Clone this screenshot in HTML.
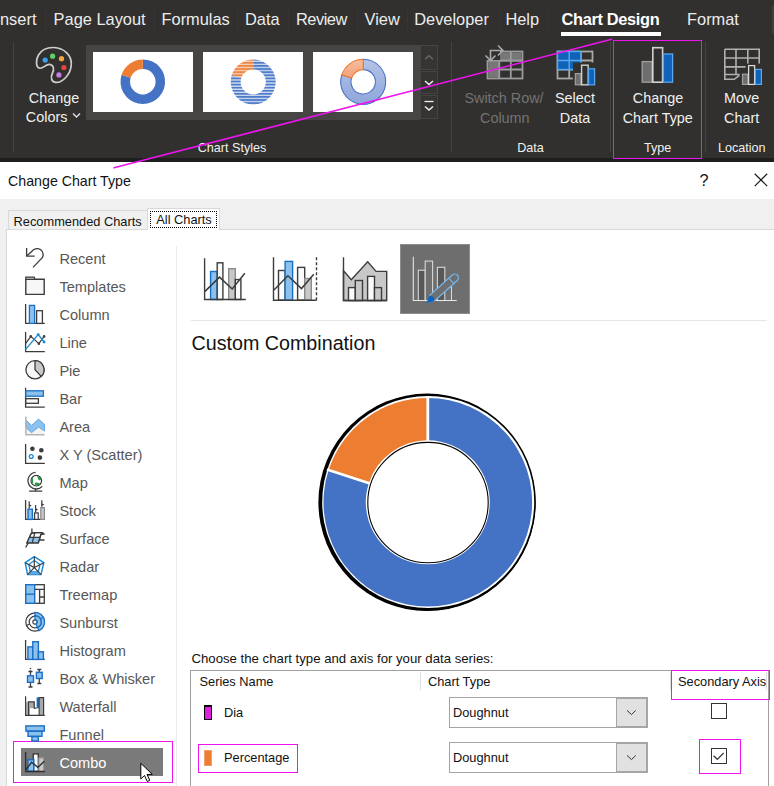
<!DOCTYPE html>
<html><head><meta charset="utf-8"><style>
html,body{margin:0;padding:0;width:774px;height:786px;overflow:hidden;background:#fff}
body{position:relative;font-family:"Liberation Sans",sans-serif}
.t{position:absolute;white-space:nowrap;font-family:"Liberation Sans",sans-serif}
svg{overflow:visible}
</style></head><body>
<div style="position:absolute;left:0px;top:0px;width:774px;height:158px;background:#31302f"></div>
<div style="position:absolute;left:0px;top:158px;width:774px;height:4px;background:#1e1e1e"></div>
<div class="t" style="left:0.00px;top:10px;font-size:16.4px;line-height:18px;color:#ececec;font-weight:400;">nsert</div>
<div class="t" style="left:53.60px;top:10px;font-size:16.4px;line-height:18px;color:#ececec;font-weight:400;">Page Layout</div>
<div class="t" style="left:161.50px;top:10px;font-size:16.4px;line-height:18px;color:#ececec;font-weight:400;">Formulas</div>
<div class="t" style="left:245.00px;top:10px;font-size:16.4px;line-height:18px;color:#ececec;font-weight:400;">Data</div>
<div class="t" style="left:296.00px;top:10px;font-size:16.4px;line-height:18px;color:#ececec;font-weight:400;letter-spacing:-0.5px">Review</div>
<div class="t" style="left:364.50px;top:10px;font-size:16.4px;line-height:18px;color:#ececec;font-weight:400;">View</div>
<div class="t" style="left:414.20px;top:10px;font-size:16.4px;line-height:18px;color:#ececec;font-weight:400;">Developer</div>
<div class="t" style="left:505.40px;top:10px;font-size:16.4px;line-height:18px;color:#ececec;font-weight:400;">Help</div>
<div class="t" style="left:561.50px;top:10px;font-size:16.4px;line-height:18px;color:#ffffff;font-weight:700;letter-spacing:-0.35px">Chart Design</div>
<div class="t" style="left:687.00px;top:10px;font-size:16.4px;line-height:18px;color:#ececec;font-weight:400;">Format</div>
<div style="position:absolute;left:45px;top:6px;width:1px;height:25px;background:#363534"></div>
<div style="position:absolute;left:154px;top:6px;width:1px;height:25px;background:#363534"></div>
<div style="position:absolute;left:237px;top:6px;width:1px;height:25px;background:#363534"></div>
<div style="position:absolute;left:288px;top:6px;width:1px;height:25px;background:#363534"></div>
<div style="position:absolute;left:357px;top:6px;width:1px;height:25px;background:#363534"></div>
<div style="position:absolute;left:407px;top:6px;width:1px;height:25px;background:#363534"></div>
<div style="position:absolute;left:499px;top:6px;width:1px;height:25px;background:#363534"></div>
<div style="position:absolute;left:548px;top:6px;width:1px;height:25px;background:#363534"></div>
<div style="position:absolute;left:561px;top:32px;width:100px;height:4px;background:#ffffff"></div>
<div style="position:absolute;left:772px;top:5px;width:3px;height:29px;background:#403f3e;border-radius:2px 0 0 2px"></div>
<div style="position:absolute;left:13px;top:42px;width:1px;height:110px;background:#444342"></div>
<div style="position:absolute;left:451px;top:42px;width:1px;height:110px;background:#444342"></div>
<div style="position:absolute;left:610px;top:42px;width:1px;height:110px;background:#444342"></div>
<div style="position:absolute;left:705px;top:42px;width:1px;height:110px;background:#444342"></div>
<div class="t" style="left:-246.00px;width:600px;text-align:center;top:90px;font-size:14.4px;line-height:16px;color:#f0f0f0;font-weight:400;">Change</div>
<div class="t" style="left:25.80px;top:109px;font-size:14.4px;line-height:16px;color:#f0f0f0;font-weight:400;">Colors</div>
<svg style="position:absolute;left:72px;top:112px" width="9" height="7" viewBox="0 0 9 7"><path d="M1 1.5 L4.5 5 L8 1.5" fill="none" stroke="#e0e0e0" stroke-width="1.4"/></svg>
<div style="position:absolute;left:86px;top:45px;width:334px;height:75px;background:#464544"></div>
<div style="position:absolute;left:93px;top:52px;width:100px;height:60px;background:#ffffff"></div>
<div style="position:absolute;left:203px;top:52px;width:100px;height:60px;background:#ffffff"></div>
<div style="position:absolute;left:313px;top:52px;width:100px;height:60px;background:#ffffff"></div>
<div style="position:absolute;left:420px;top:45px;width:18px;height:25px;background:#353433;border:1px solid #454443;box-sizing:border-box"></div>
<div style="position:absolute;left:420px;top:71px;width:18px;height:23px;background:#353433;border:1px solid #454443;box-sizing:border-box"></div>
<div style="position:absolute;left:420px;top:95px;width:18px;height:24px;background:#353433;border:1px solid #454443;box-sizing:border-box"></div>
<svg style="position:absolute;left:420px;top:45px" width="18" height="25" viewBox="0 0 18 25"><path d="M5 14.2 L9 10.7 L13 14.2" fill="none" stroke="#6a6a6a" stroke-width="1.3"/></svg>
<svg style="position:absolute;left:420px;top:71px" width="18" height="23" viewBox="0 0 18 23"><path d="M5 10 L9 13.5 L13 10" fill="none" stroke="#f0f0f0" stroke-width="1.5"/></svg>
<svg style="position:absolute;left:420px;top:95px" width="18" height="24" viewBox="0 0 18 24"><path d="M4.5 6.5 H13.5" stroke="#f0f0f0" stroke-width="1.3"/><path d="M5 11.5 L9 15 L13 11.5" fill="none" stroke="#f0f0f0" stroke-width="1.5"/></svg>
<div class="t" style="left:-68.00px;width:600px;text-align:center;top:141px;font-size:12.6px;line-height:14px;color:#f0f0f0;font-weight:400;">Chart Styles</div>
<div class="t" style="left:464.40px;top:90px;font-size:14.4px;line-height:16px;color:#747372;font-weight:400;">Switch Row/</div>
<div class="t" style="left:480.00px;top:110px;font-size:14.4px;line-height:16px;color:#747372;font-weight:400;">Column</div>
<div class="t" style="left:555.00px;top:90px;font-size:14.4px;line-height:16px;color:#f0f0f0;font-weight:400;">Select</div>
<div class="t" style="left:559.80px;top:110px;font-size:14.4px;line-height:16px;color:#f0f0f0;font-weight:400;">Data</div>
<div class="t" style="left:230.50px;width:600px;text-align:center;top:141px;font-size:12.6px;line-height:14px;color:#f0f0f0;font-weight:400;">Data</div>
<div class="t" style="left:358.00px;width:600px;text-align:center;top:90px;font-size:14.4px;line-height:16px;color:#f0f0f0;font-weight:400;">Change</div>
<div class="t" style="left:357.80px;width:600px;text-align:center;top:110px;font-size:14.4px;line-height:16px;color:#f0f0f0;font-weight:400;">Chart Type</div>
<div class="t" style="left:357.60px;width:600px;text-align:center;top:141px;font-size:12.6px;line-height:14px;color:#f0f0f0;font-weight:400;">Type</div>
<div class="t" style="left:441.60px;width:600px;text-align:center;top:90px;font-size:14.4px;line-height:16px;color:#f0f0f0;font-weight:400;">Move</div>
<div class="t" style="left:441.60px;width:600px;text-align:center;top:110px;font-size:14.4px;line-height:16px;color:#f0f0f0;font-weight:400;">Chart</div>
<div class="t" style="left:441.70px;width:600px;text-align:center;top:141px;font-size:12.6px;line-height:14px;color:#f0f0f0;font-weight:400;">Location</div>
<div style="position:absolute;left:0px;top:162px;width:774px;height:624px;background:#ffffff"></div>
<div class="t" style="left:8.10px;top:173px;font-size:14.2px;line-height:16px;color:#121212;font-weight:400;">Change Chart Type</div>
<div class="t" style="left:404.10px;width:600px;text-align:center;top:171px;font-size:16.2px;line-height:18px;color:#121212;font-weight:400;">?</div>
<svg style="position:absolute;left:750px;top:170px" width="22" height="22" viewBox="0 0 22 22"><path d="M4.7 3.7 L17.2 16.1 M17.2 3.7 L4.7 16.1" stroke="#1a1a1a" stroke-width="1.2"/></svg>
<div style="position:absolute;left:0px;top:199px;width:774px;height:587px;background:#f0f0f0"></div>
<div style="position:absolute;left:6px;top:229px;width:768px;height:557px;background:#ffffff;border-top:1px solid #d9d9d9;border-left:1px solid #d9d9d9;box-sizing:border-box"></div>
<div style="position:absolute;left:8px;top:210px;width:140px;height:19px;background:#f0f0f0;border:1px solid #d9d9d9;border-bottom:none;box-sizing:border-box"></div>
<div style="position:absolute;left:147px;top:208px;width:73px;height:22px;background:#ffffff;border:1px solid #d9d9d9;border-bottom:none;box-sizing:border-box"></div>
<div style="position:absolute;left:150px;top:211px;width:67px;height:17px;border:1px dotted #000;box-sizing:border-box"></div>
<div class="t" style="left:13.60px;top:214px;font-size:12.8px;line-height:15px;color:#121212;font-weight:400;">Recommended Charts</div>
<div class="t" style="left:156.30px;top:212px;font-size:12.8px;line-height:15px;color:#121212;font-weight:400;">All Charts</div>
<div style="position:absolute;left:176px;top:246px;width:1px;height:540px;background:#ebebeb"></div>
<div class="t" style="left:59.40px;top:251px;font-size:14.6px;line-height:16px;color:#575757;font-weight:400;">Recent</div>
<div class="t" style="left:59.40px;top:279px;font-size:14.6px;line-height:16px;color:#575757;font-weight:400;">Templates</div>
<div class="t" style="left:59.40px;top:307px;font-size:14.6px;line-height:16px;color:#575757;font-weight:400;">Column</div>
<div class="t" style="left:59.40px;top:335px;font-size:14.6px;line-height:16px;color:#575757;font-weight:400;">Line</div>
<div class="t" style="left:59.40px;top:363px;font-size:14.6px;line-height:16px;color:#575757;font-weight:400;">Pie</div>
<div class="t" style="left:59.40px;top:391px;font-size:14.6px;line-height:16px;color:#575757;font-weight:400;">Bar</div>
<div class="t" style="left:59.40px;top:419px;font-size:14.6px;line-height:16px;color:#575757;font-weight:400;">Area</div>
<div class="t" style="left:59.40px;top:447px;font-size:14.6px;line-height:16px;color:#575757;font-weight:400;">X Y (Scatter)</div>
<div class="t" style="left:59.40px;top:475px;font-size:14.6px;line-height:16px;color:#575757;font-weight:400;">Map</div>
<div class="t" style="left:59.40px;top:503px;font-size:14.6px;line-height:16px;color:#575757;font-weight:400;">Stock</div>
<div class="t" style="left:59.40px;top:531px;font-size:14.6px;line-height:16px;color:#575757;font-weight:400;">Surface</div>
<div class="t" style="left:59.40px;top:559px;font-size:14.6px;line-height:16px;color:#575757;font-weight:400;">Radar</div>
<div class="t" style="left:59.40px;top:587px;font-size:14.6px;line-height:16px;color:#575757;font-weight:400;">Treemap</div>
<div class="t" style="left:59.40px;top:615px;font-size:14.6px;line-height:16px;color:#575757;font-weight:400;">Sunburst</div>
<div class="t" style="left:59.40px;top:643px;font-size:14.6px;line-height:16px;color:#575757;font-weight:400;">Histogram</div>
<div class="t" style="left:59.40px;top:671px;font-size:14.6px;line-height:16px;color:#575757;font-weight:400;">Box &amp; Whisker</div>
<div class="t" style="left:59.40px;top:699px;font-size:14.6px;line-height:16px;color:#575757;font-weight:400;">Waterfall</div>
<div class="t" style="left:59.40px;top:727px;font-size:14.6px;line-height:16px;color:#575757;font-weight:400;">Funnel</div>
<div style="position:absolute;left:21px;top:748px;width:142px;height:28px;background:#7a7a7a"></div>
<div class="t" style="left:59.40px;top:755px;font-size:14.6px;line-height:16px;color:#ffffff;font-weight:400;">Combo</div>
<div style="position:absolute;left:13px;top:741px;width:160px;height:42px;border:1.3px solid #ee14ee;box-sizing:border-box"></div>
<div style="position:absolute;left:400px;top:244px;width:70px;height:70px;background:#6e6e6e;border:1px solid #8c8c8c;box-sizing:border-box"></div>
<div style="position:absolute;left:191px;top:320px;width:576px;height:1px;background:#e6e6e6"></div>
<div class="t" style="left:191.50px;top:332px;font-size:19.7px;line-height:22px;color:#121212;font-weight:400;">Custom Combination</div>
<svg style="position:absolute;left:318px;top:392px" width="220" height="220" viewBox="0 0 220 220">
<circle cx="109.5" cy="110.5" r="108" fill="#000"/>
<circle cx="110.5" cy="110" r="106" fill="#fff"/>
</svg>
<div class="t" style="left:191.50px;top:651px;font-size:13.2px;line-height:15px;color:#121212;font-weight:400;">Choose the chart type and axis for your data series:</div>
<div style="position:absolute;left:190px;top:670px;width:579px;height:116px;border:1px solid #a0a0a0;border-bottom:none;box-sizing:border-box"></div>
<div style="position:absolute;left:420px;top:672px;width:1px;height:18px;background:#e0e0e0"></div>
<div style="position:absolute;left:670px;top:672px;width:1px;height:18px;background:#e0e0e0"></div>
<div style="position:absolute;left:766px;top:672px;width:1px;height:18px;background:#e0e0e0"></div>
<div class="t" style="left:199.50px;top:674px;font-size:12.8px;line-height:15px;color:#121212;font-weight:400;">Series Name</div>
<div class="t" style="left:428.00px;top:674px;font-size:12.8px;line-height:15px;color:#121212;font-weight:400;">Chart Type</div>
<div class="t" style="left:678.00px;top:674px;font-size:12.8px;line-height:15px;color:#121212;font-weight:400;">Secondary Axis</div>
<div style="position:absolute;left:204px;top:705px;width:8px;height:15px;background:#dd20dd;border:1px solid #000;border-top-width:2px;box-sizing:border-box"></div>
<div class="t" style="left:224.00px;top:705px;font-size:12.8px;line-height:15px;color:#121212;font-weight:400;">Dia</div>
<div style="position:absolute;left:204px;top:750px;width:8px;height:16px;background:#ed7d31;border:1px solid #f0a070;box-sizing:border-box"></div>
<div class="t" style="left:224.00px;top:750px;font-size:12.8px;line-height:15px;color:#121212;font-weight:400;">Percentage</div>
<div style="position:absolute;left:449px;top:697px;width:199px;height:31px;background:#fff;border:1px solid #a4a4a8;box-sizing:border-box"></div>
<div style="position:absolute;left:616px;top:697px;width:32px;height:31px;background:#e1e1e1;border:2px solid #a6a6a9;border-left-width:1px;box-sizing:border-box"></div>
<svg style="position:absolute;left:616px;top:697px" width="32" height="30" viewBox="0 0 32 30"><path d="M11 13.4 L15.5 17.6 L19.8 13.4" fill="none" stroke="#333" stroke-width="1"/></svg>
<div class="t" style="left:453.00px;top:705px;font-size:12.8px;line-height:15px;color:#121212;font-weight:400;">Doughnut</div>
<div style="position:absolute;left:449px;top:742px;width:199px;height:31px;background:#fff;border:1px solid #a4a4a8;box-sizing:border-box"></div>
<div style="position:absolute;left:616px;top:742px;width:32px;height:31px;background:#e1e1e1;border:2px solid #a6a6a9;border-left-width:1px;box-sizing:border-box"></div>
<svg style="position:absolute;left:616px;top:742px" width="32" height="30" viewBox="0 0 32 30"><path d="M11 13.4 L15.5 17.6 L19.8 13.4" fill="none" stroke="#333" stroke-width="1"/></svg>
<div class="t" style="left:453.00px;top:750px;font-size:12.8px;line-height:15px;color:#121212;font-weight:400;">Doughnut</div>
<div style="position:absolute;left:711px;top:703px;width:16px;height:16px;background:#fff;border:1px solid #333;box-sizing:border-box"></div>
<div style="position:absolute;left:711px;top:748px;width:16px;height:16px;background:#fff;border:1px solid #333;box-sizing:border-box"></div>
<svg style="position:absolute;left:711px;top:748px" width="16" height="16" viewBox="0 0 16 16"><path d="M2.6 7.8 L6.3 11.3 L12.6 5" fill="none" stroke="#333" stroke-width="1.2"/></svg>
<div style="position:absolute;left:198px;top:744px;width:100px;height:29px;border:1px solid #ee14ee;box-sizing:border-box"></div>
<div style="position:absolute;left:671px;top:670px;width:99px;height:30px;border:1.2px solid #ee14ee;box-sizing:border-box"></div>
<div style="position:absolute;left:699px;top:739px;width:42px;height:35px;border:1px solid #ee14ee;box-sizing:border-box"></div>
<div style="position:absolute;left:613px;top:40px;width:89px;height:119px;border:1px solid #ee14ee;box-sizing:border-box"></div>
<svg style="position:absolute;left:0;top:0" width="774" height="786"><path d="M39.7 68.2 C36 67.5 35.3 60.5 38.5 55 C42 49 48.5 47.3 54 47.5 C64 48 71.5 55 71.3 64 C71 75 62 82.8 55.8 82.4 C51.5 82.2 50.3 77.5 52.3 73.5 C54.5 69.5 53.8 64.8 49.5 64.3 C45.5 64 43.5 68.8 39.7 68.2 Z" fill="none" stroke="#cdcdcd" stroke-width="1.7"/>
<circle cx="45.2" cy="60.1" r="2.6" fill="#3ba1ef"/>
<circle cx="52.6" cy="56.2" r="2.6" fill="#5fd06a"/>
<circle cx="61.5" cy="58.7" r="2.6" fill="#f4a53c"/>
<circle cx="63.9" cy="67.5" r="2.6" fill="#e8433f"/>
<circle cx="58.9" cy="74.9" r="2.6" fill="#c87be0"/>
<g fill="none" stroke="#9b9b9b" stroke-width="1.8">
<rect x="487.5" y="51.5" width="35" height="27" />
<path d="M499.2 51.5 V78.5 M510.8 51.5 V78.5 M487.5 60.5 H522.5 M487.5 69.5 H522.5"/>
</g>
<rect x="500.2" y="52.4" width="21.4" height="7.2" fill="#777"/>
<rect x="488.4" y="61.4" width="9.9" height="16.2" fill="#777"/>
<path d="M487.5 60.5 H522.5 M499.2 51.5 V78.5 M510.8 51.5 V60.5" stroke="#9b9b9b" stroke-width="1.8" fill="none"/>
<rect x="486" y="44" width="14" height="16" fill="#31302f"/>
<path d="M490.5 60 V50.5 H503" fill="none" stroke="#a8a8a8" stroke-width="1.6"/>
<path d="M498 45.5 L503 50.5 L498 55.5" fill="none" stroke="#a8a8a8" stroke-width="1.6"/>
<path d="M485.5 55.5 L490.5 60.5 L495.5 55.5" fill="none" stroke="#a8a8a8" stroke-width="1.6"/>

<g fill="none" stroke="#a8a8a8" stroke-width="1.8">
<rect x="557.5" y="51.5" width="35" height="27"/>
<path d="M569.2 51.5 V78.5 M580.8 51.5 V78.5 M557.5 60.5 H592.5 M557.5 69.5 H592.5"/>
</g>
<rect x="557.5" y="51.5" width="23.3" height="18" fill="#0f62b8" stroke="#5aa8ee" stroke-width="1.4"/>
<path d="M569.2 51.5 V69.5 M557.5 60.5 H580.8" stroke="#5aa8ee" stroke-width="1.4"/>
<rect x="573" y="62.5" width="24" height="24" fill="#31302f"/>
<rect x="575.3" y="73.6" width="5.6" height="11.2" fill="#6e6e6e" stroke="#a0a0a0" stroke-width="1.2"/>
<rect x="581.6" y="65.2" width="6.6" height="19.6" fill="#31302f" stroke="#d0d0d0" stroke-width="1.4"/>
<rect x="588.6" y="68.8" width="6" height="16" fill="#0f62b8" stroke="#5aa8ee" stroke-width="1.2"/>

<rect x="642.2" y="61.6" width="9.8" height="20.6" fill="#6e6e6e" stroke="#a0a0a0" stroke-width="1.3"/>
<rect x="652.8" y="47.7" width="9.8" height="34.5" fill="#31302f" stroke="#d2d2d2" stroke-width="1.6"/>
<rect x="663.4" y="54" width="9.2" height="28.2" fill="#0f62b8" stroke="#5aa8ee" stroke-width="1.3"/>

<g fill="none" stroke="#b0b0b0" stroke-width="1.6">
<path d="M724.8 49.2 H759.2 V75 M724.8 49.2 V79.3 H734.2 L740.6 74.5 H759.2 M736 49.2 V74.5 M747.8 49.2 V74.5 M724.8 58 H759.2 M724.8 66.9 H759.2 M724.8 74.5 H740.6"/>
</g>
<rect x="739.6" y="71.6" width="25" height="16" fill="#31302f"/>
<rect x="745.6" y="63.6" width="19" height="9" fill="#31302f"/>
<rect x="752.8" y="66.6" width="12" height="6" fill="#31302f"/>
<rect x="742.5" y="74.2" width="5.4" height="10.2" fill="#6e6e6e" stroke="#a0a0a0" stroke-width="1.2"/>
<rect x="748.6" y="65.6" width="6" height="18.8" fill="#31302f" stroke="#d8d8d8" stroke-width="1.3"/>
<rect x="755.4" y="69.4" width="6" height="15" fill="#0f62b8" stroke="#5aa8ee" stroke-width="1.2"/>
<path d="M142.80 59.40 A22.3 22.3 0 1 1 121.59 74.81 L130.63 77.74 A12.8 12.8 0 1 0 142.80 68.90 Z" fill="#4472c4"/><path d="M121.59 74.81 A22.3 22.3 0 0 1 142.80 59.40 L142.80 68.90 A12.8 12.8 0 0 0 130.63 77.74 Z" fill="#ed7d31"/><defs><pattern id="st" width="4" height="3.1" patternUnits="userSpaceOnUse"><rect width="4" height="3.1" fill="#d4def2"/><rect width="4" height="1.8" fill="#4d7bc9"/></pattern><pattern id="sto" width="4" height="3.1" patternUnits="userSpaceOnUse"><rect width="4" height="3.1" fill="#f8d6c0"/><rect width="4" height="1.8" fill="#ee8442"/></pattern><linearGradient id="gb" x1="0" y1="0" x2="0" y2="1"><stop offset="0" stop-color="#b4c3e6"/><stop offset="1" stop-color="#8ea6db"/></linearGradient><linearGradient id="go" x1="0" y1="0" x2="0" y2="1"><stop offset="0" stop-color="#f6bda0"/><stop offset="1" stop-color="#f2a27a"/></linearGradient></defs><path d="M253.20 59.50 A22.5 22.5 0 1 1 231.80 75.05 L241.22 78.11 A12.6 12.6 0 1 0 253.20 69.40 Z" fill="url(#st)"/><path d="M231.80 75.05 A22.5 22.5 0 0 1 253.20 59.50 L253.20 69.40 A12.6 12.6 0 0 0 241.22 78.11 Z" fill="url(#sto)"/><path d="M363.20 59.30 A22.5 22.5 0 1 1 341.80 74.85 L351.60 78.03 A12.2 12.2 0 1 0 363.20 69.60 Z" fill="url(#gb)" stroke="#4a72c4" stroke-width="1.1"/><path d="M341.80 74.85 A22.5 22.5 0 0 1 363.20 59.30 L363.20 69.60 A12.2 12.2 0 0 0 351.60 78.03 Z" fill="url(#go)" stroke="#ed7d31" stroke-width="1.1"/><circle cx="427.1" cy="502.3" r="108.7" fill="#000"/><circle cx="428.2" cy="502.0" r="106.0" fill="#fff"/><path d="M427.80 398.00 A104.3 104.3 0 1 1 328.60 470.07 L368.83 483.14 A62 62 0 1 0 427.80 440.30 Z" fill="#4472c4"/><path d="M328.60 470.07 A104.3 104.3 0 0 1 427.80 398.00 L427.80 440.30 A62 62 0 0 0 368.83 483.14 Z" fill="#ed7d31"/><line x1="427.80" y1="442.30" x2="427.80" y2="396.30" stroke="#fff" stroke-width="2.8"/><line x1="370.74" y1="483.76" x2="326.99" y2="469.54" stroke="#fff" stroke-width="2.8"/><circle cx="428.0" cy="502.6" r="61.0" fill="#fff"/><circle cx="428.0" cy="502.6" r="60.2" fill="none" stroke="#000" stroke-width="1.1"/><g transform="translate(25,248)"><path d="M1.6 0 V8.2 H9.7" fill="none" stroke="#3c3c3c" stroke-width="1.3"/><path d="M2 7.8 L8.5 1.8 Q12 -0.5 15.5 1.5 Q19.5 4.5 17.5 9.5 L8 19.4" fill="none" stroke="#3c3c3c" stroke-width="1.3"/></g><g transform="translate(25,276)"><path d="M0.8 3.3 H19.2 V18.4 H0.8 Z" fill="#f7f7f7" stroke="#3c3c3c" stroke-width="1.4"/><path d="M0.8 1.2 H9.2 L10 3.3 H0.8 Z" fill="#c8c8c8" stroke="#3c3c3c" stroke-width="1.2"/></g><g transform="translate(25,304)"><path d="M0.6 0 V19.4 H19.8" fill="none" stroke="#3c3c3c" stroke-width="1.3"/><rect x="4.4" y="1.4" width="5.2" height="18" fill="#8cc1ed" stroke="#1a6fc4" stroke-width="1.3"/><rect x="11.6" y="6.7" width="5.8" height="12.7" fill="#fafafa" stroke="#3c3c3c" stroke-width="1.3"/></g><g transform="translate(25,332)"><path d="M0.6 0 V19.7 H19.8" fill="none" stroke="#3c3c3c" stroke-width="1.3"/><path d="M0.6 11.7 L5.8 4.4 L13.9 11.7 L19.1 4.4" fill="none" stroke="#3c3c3c" stroke-width="1.2"/><circle cx="5.8" cy="4.4" r="1.3" fill="#3c3c3c"/><circle cx="13.9" cy="11.7" r="1.3" fill="#3c3c3c"/><circle cx="19.1" cy="4.4" r="1.3" fill="#3c3c3c"/><path d="M0.4 17.6 L13.2 2.6 L19.1 10" fill="none" stroke="#1a8ad4" stroke-width="1.3"/><circle cx="13.2" cy="2.6" r="1.4" fill="#1a8ad4"/><circle cx="19.1" cy="10" r="1.4" fill="#1a8ad4"/></g><g transform="translate(25,360)"><circle cx="10" cy="9.8" r="9.1" fill="#f7f7f7" stroke="#3c3c3c" stroke-width="1.3"/><path d="M10 9.8 V0.7 A9.1 9.1 0 0 1 16.2 16.4 Z" fill="#c8c8c8" stroke="#3c3c3c" stroke-width="1.3"/></g><g transform="translate(25,388)"><path d="M0.6 -0.2 V19.1 H19.8" fill="none" stroke="#3c3c3c" stroke-width="1.3"/><rect x="0.8" y="2.8" width="17.6" height="5.4" fill="#8cc1ed" stroke="#1a6fc4" stroke-width="1.3"/><rect x="0.8" y="10.7" width="12.6" height="4.6" fill="#fafafa" stroke="#3c3c3c" stroke-width="1.3"/></g><g transform="translate(25,416)"><path d="M0.9 4.1 L6.5 9.4 L13.5 3.1 L19.5 8.3 V18.8 H0.9 Z" fill="#f4f4f4"/><path d="M0.9 4.1 L6.5 9.4 L13.5 3.1 L19.5 8.3 V15 L13.5 11.1 L6.5 16.7 L0.9 11.5 Z" fill="#8cc1ed" stroke="#5aa5e5" stroke-width="0.9"/><path d="M0.9 0.6 V18.8 H19.5" fill="none" stroke="#b5b5b5" stroke-width="1.5"/></g><g transform="translate(25,444)"><path d="M0.6 0 V19.4 H19.8" fill="none" stroke="#3c3c3c" stroke-width="1.3"/><circle cx="7.4" cy="4.8" r="2.3" fill="#3c3c3c"/><circle cx="16.3" cy="6.2" r="2.3" fill="#3c3c3c"/><circle cx="14.9" cy="13.6" r="2.3" fill="#3c3c3c"/><circle cx="6.2" cy="12.5" r="1.9" fill="none" stroke="#1a8ad4" stroke-width="1.3"/></g><g transform="translate(25,472)"><defs><clipPath id="gc"><circle cx="11.3" cy="8.7" r="5"/></clipPath></defs><circle cx="11.3" cy="8.7" r="5.3" fill="#fff" stroke="#3c3c3c" stroke-width="1.2"/><g clip-path="url(#gc)" fill="#2f9a45"><path d="M11.5 3 Q15.5 3 17 7.5 L14.8 8.6 L13.2 7.6 L12.6 5.6 Z"/><path d="M9.8 10.8 Q12.8 10.2 15 11.5 L13.3 14.2 Q10.8 14.5 9.8 12.6 Z"/><path d="M5.8 6.5 L8 5.8 L8.2 11.4 L5.8 11.8 Z"/></g><path d="M10.6 0.4 A8.3 8.3 0 1 0 17.3 14.4" fill="none" stroke="#3c3c3c" stroke-width="1.3"/><path d="M10.5 16.8 V19.2 M4.1 19.2 H17.2" fill="none" stroke="#3c3c3c" stroke-width="1.3"/></g><g transform="translate(25,500)"><path d="M0.6 0 V19.4 H19.8" fill="none" stroke="#3c3c3c" stroke-width="1.3"/><rect x="3" y="9.2" width="4.4" height="10.2" fill="#8cc1ed" stroke="#1a6fc4" stroke-width="1.4"/><rect x="9.6" y="12.9" width="3.6" height="6.5" fill="#fafafa" stroke="#3c3c3c" stroke-width="1.2"/><rect x="15.8" y="7.6" width="3.6" height="11.8" fill="#c8c8c8" stroke="#8a8a8a" stroke-width="1.2"/><path d="M4.2 1.2 V8.4 M10.6 5 V12.2 M16.8 0.3 V6.8" fill="none" stroke="#3c3c3c" stroke-width="1.2"/><path d="M4.2 4.3 L6.7 5.6 L4.2 6.9 Z M10.6 8.3 L13.1 9.6 L10.6 10.9 Z M16.8 3.3 L19.3 4.6 L16.8 5.9 Z" fill="#3c3c3c"/></g><g transform="translate(25,528)"><path d="M6.9 0.4 V5.5" stroke="#3c3c3c" stroke-width="1.3"/><path d="M2 14.8 L6 5.8 Q7.5 4.5 10 4.6 H17.2 L18.6 5.8 L16 6.3 L13.3 14.8 Z" fill="#fafafa" stroke="#3c3c3c" stroke-width="1.3"/><path d="M3.5 11 L4.5 9.4 H14.6 L13.3 14.8 H2 Z" fill="#8cc1ed"/><path d="M2 14.8 L6 5.8 Q7.5 4.5 10 4.6 H17.2 L18.6 5.8 L16 6.3 L13.3 14.8 Z M9.8 4.8 L7.2 14.8 M4.6 9.4 H15" fill="none" stroke="#3c3c3c" stroke-width="1.3"/><path d="M14.6 12 H19.5 M3.4 15 L0.6 19.3" fill="none" stroke="#3c3c3c" stroke-width="1.3"/></g><g transform="translate(25,556)"><path d="M9.3 0.6 L18.8 6.7 L16 18.6 H2.6 L0.2 6.7 Z" fill="none" stroke="#1a8ad4" stroke-width="1.5"/><path d="M9.3 4.5 L15 8.5 L13.3 16 H5.3 L3.8 8.5 Z" fill="none" stroke="#1a8ad4" stroke-width="1.3"/><path d="M5.3 16 H13.3 L14 18.6 H4.5 Z" fill="#5aa8e8"/><path d="M9.3 0.6 V11.5 M0.2 6.7 L9.3 11.5 L18.8 6.7 M2.6 18.6 L9.3 11.5 L16 18.6" fill="none" stroke="#3c3c3c" stroke-width="1.2"/></g><g transform="translate(25,584)"><rect x="0.7" y="0.7" width="18.6" height="18.6" fill="#fafafa" stroke="#3c3c3c" stroke-width="1.3"/><rect x="0.7" y="0.7" width="9" height="18.6" fill="#8cc1ed" stroke="#1a6fc4" stroke-width="1.4"/><path d="M0.7 10.2 H9.7" stroke="#1a6fc4" stroke-width="1.4"/><path d="M9.7 5.3 H19.3 M14.6 5.3 V19.3 M14.6 13 H19.3" fill="none" stroke="#3c3c3c" stroke-width="1.3"/></g><g transform="translate(25,612)"><circle cx="10" cy="10" r="9.2" fill="none" stroke="#3c3c3c" stroke-width="1.2"/><circle cx="10" cy="10" r="5.8" fill="none" stroke="#3c3c3c" stroke-width="1.2"/><circle cx="10" cy="10" r="2.2" fill="none" stroke="#3c3c3c" stroke-width="1.2"/><path d="M10.00 0.40 A9.6 9.6 0 0 1 14.06 18.70 L12.58 15.53 A6.1 6.1 0 0 0 10.00 3.90 Z" fill="#8cc1ed" stroke="#1a6fc4" stroke-width="1.3"/><path d="M10.00 3.90 A6.1 6.1 0 0 1 12.58 15.53 L11.01 12.18 A2.4 2.4 0 0 0 10.00 7.60 Z" fill="#8cc1ed" stroke="#1a6fc4" stroke-width="1.3"/><path d="M15.3 7 L18.4 5.3" stroke="#1a6fc4" stroke-width="1.1"/><path d="M1.5 13.5 L4.6 12" stroke="#3c3c3c" stroke-width="1.1"/></g><g transform="translate(25,640)"><path d="M0.6 0 V19.4 H19.8" fill="none" stroke="#3c3c3c" stroke-width="1.3"/><rect x="2.9" y="6.9" width="4.9" height="12.5" fill="#8cc1ed" stroke="#1a6fc4" stroke-width="1.4"/><rect x="7.8" y="1.7" width="5.6" height="17.7" fill="#8cc1ed" stroke="#1a6fc4" stroke-width="1.4"/><rect x="13.4" y="11.8" width="5" height="7.6" fill="#8cc1ed" stroke="#1a6fc4" stroke-width="1.4"/></g><g transform="translate(25,668)"><path d="M5.5 2.2 V19 M3.5 3.5 H7.5 M3.5 19 H7.5 M14.3 1.5 V15.5 M12.3 1.5 H16.3 M12.3 15.5 H16.3" fill="none" stroke="#3c3c3c" stroke-width="1.3"/><circle cx="5.5" cy="0.5" r="0.8" fill="#3c3c3c"/><rect x="2.5" y="7.8" width="6" height="6.5" fill="#8cc1ed" stroke="#1a6fc4" stroke-width="1.4"/><rect x="11.4" y="4.3" width="5.8" height="6.2" fill="#8cc1ed" stroke="#1a6fc4" stroke-width="1.4"/></g><g transform="translate(25,696)"><rect x="1.2" y="5.8" width="3.6" height="13.6" fill="#a8a8a8"/><rect x="5" y="5.8" width="4.6" height="6.4" fill="#a8a8a8"/><rect x="11.6" y="1.4" width="2.4" height="10.8" fill="#1a6fc4"/><rect x="14.8" y="1.4" width="3.8" height="18" fill="#a8a8a8"/><path d="M0.6 0.2 V19.4 H19.8 M3.6 19.4 V5.8 H9.2 V12.2 H11.6 M14.2 19.4 V1.6 H18.6 V19.4" fill="none" stroke="#3c3c3c" stroke-width="1.2"/></g><g transform="translate(25,724)"><rect x="0.9" y="1.9" width="18.4" height="5.2" fill="#8cc1ed" stroke="#1a6fc4" stroke-width="1.4"/><rect x="3" y="7.3" width="14" height="5" fill="#8cc1ed" stroke="#1a6fc4" stroke-width="1.4"/><rect x="6.9" y="12.6" width="6.4" height="4.4" fill="#8cc1ed" stroke="#1a6fc4" stroke-width="1.4"/></g><g transform="translate(25,752)"><rect x="8.3" y="1.9" width="5" height="17.5" fill="#fff" stroke="#3c3c3c" stroke-width="1.4"/><rect x="13.9" y="6" width="4.6" height="13.4" fill="#c8c8c8" stroke="#999" stroke-width="1.2"/><rect x="2.8" y="7.7" width="6" height="11.7" fill="#8cc1ed" stroke="#1a6fc4" stroke-width="1.6"/><path d="M0.6 0 V19.5 H19.8" fill="none" stroke="#2e2e2e" stroke-width="1.3"/><path d="M0.8 17.7 L6.6 10.3 L12.8 15.4 L19.4 9.2" fill="none" stroke="#2e2e2e" stroke-width="1.4"/></g>
<g stroke-width="1.4">
<rect x="210.6" y="271.5" width="6.6" height="28" fill="#8cc1ed" stroke="#1a6fc4"/>
<rect x="217.2" y="262.8" width="5.7" height="36.7" fill="#fafafa" stroke="#3c3c3c"/>
<rect x="228.7" y="268.7" width="6.6" height="30.8" fill="#c8c8c8" stroke="#8a8a8a"/>
<rect x="235.3" y="279.6" width="5.6" height="19.9" fill="#fafafa" stroke="#3c3c3c"/>
<path d="M204.6 258.3 V299.5 H245.8" fill="none" stroke="#3c3c3c"/>
<path d="M205 291.4 L219.5 277.1 L232.2 289 L244.8 273.3" fill="none" stroke="#3c3c3c" stroke-width="1.5"/>
</g>
<g stroke-width="1.4">
<rect x="278.5" y="270.5" width="6.6" height="29.7" fill="#fafafa" stroke="#3c3c3c"/>
<rect x="285.1" y="261.4" width="7.5" height="38.8" fill="#8cc1ed" stroke="#1a6fc4"/>
<rect x="297.6" y="267.4" width="7.1" height="32.8" fill="#fafafa" stroke="#3c3c3c"/>
<rect x="304.7" y="278.5" width="6.6" height="21.7" fill="#c8c8c8" stroke="#8a8a8a"/>
<path d="M273.5 257.2 V300.2 H316.5" fill="none" stroke="#3c3c3c"/>
<path d="M316.5 257.2 V300.2" fill="none" stroke="#3c3c3c" stroke-dasharray="3 2"/>
<path d="M274 290 L287.9 275.7 L301.5 288.6 L313.8 274.2" fill="none" stroke="#3c3c3c" stroke-width="1.5"/>
</g>
<g stroke-width="1.4">
<path d="M343.5 270.8 L351.3 279.6 L367.7 261.8 L376.1 271.4 H386.7 V300.5 H343.5 Z" fill="#c8c8c8" stroke="#3c3c3c"/>
<rect x="348.5" y="287.6" width="6.8" height="12.9" fill="#fafafa" stroke="#3c3c3c"/>
<rect x="355.3" y="280.5" width="7.2" height="20" fill="#c8c8c8" stroke="#3c3c3c"/>
<rect x="367.6" y="276.4" width="6.9" height="24.1" fill="#fafafa" stroke="#3c3c3c"/>
<rect x="374.5" y="287.6" width="7" height="12.9" fill="#c8c8c8" stroke="#3c3c3c"/>
<path d="M343.5 257.2 V300.5 H386.7" fill="none" stroke="#3c3c3c"/>
</g>
<g stroke-width="1.1">
<rect x="418.3" y="270.2" width="6.9" height="30.3" fill="#585858" stroke="#d8d8d8"/>
<rect x="425.2" y="261.1" width="7.4" height="39.4" fill="#6f6f6f" stroke="#d8d8d8"/>
<rect x="437.4" y="267.3" width="7.4" height="33.2" fill="#585858" stroke="#d8d8d8"/>
<path d="M444.8 287 H451.5 V300.5" fill="none" stroke="#d8d8d8"/>
<path d="M413.3 256.8 V300.5 H456.8" fill="none" stroke="#e6e6e6"/>
<g transform="translate(427.6 302.2) rotate(-42)">
<path d="M0 0 L7 -3.7 H36.5 A3.7 3.7 0 0 1 36.5 3.7 H7 Z" fill="#6f6f6f" stroke="#70b6ee" stroke-width="1.3"/>
<path d="M32 -3.7 V3.7" stroke="#70b6ee" stroke-width="1.2"/>
<path d="M0.3 0 L5.2 -2.6 A2.9 2.9 0 0 1 5.2 2.6 Z" fill="#0a64c0" stroke="#0a64c0" stroke-width="1.6"/>
</g>
</g>
<path d="M140.8 763.3 V779 L144.5 775.5 L147.3 781.5 L149.8 780.4 L147.1 774.5 L152.3 774.3 Z" fill="#fff" stroke="#000" stroke-width="1" stroke-linejoin="round"/></svg>
<svg style="position:absolute;left:0px;top:0px" width="774" height="786" viewBox="0 0 774 786"><line x1="114" y1="167.8" x2="611.7" y2="39.2" stroke="#ee14ee" stroke-width="1.5" stroke-linecap="round"/></svg>
</body></html>
